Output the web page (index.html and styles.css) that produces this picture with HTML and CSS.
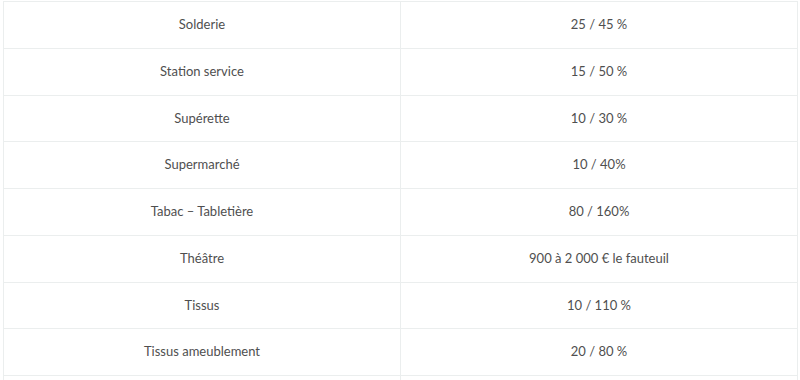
FILE: index.html
```html
<!DOCTYPE html>
<html lang="fr">
<head>
<meta charset="utf-8">
<link rel="stylesheet" href="styles.css">
</head>
<body>
<div class="wrap">
<table class="rates">
<tbody>
<tr><td>Solderie</td><td>25 / 45 %</td></tr>
<tr><td>Station service</td><td>15 / 50 %</td></tr>
<tr><td>Supérette</td><td>10 / 30 %</td></tr>
<tr><td>Supermarché</td><td>10 / 40%</td></tr>
<tr><td>Tabac – Tabletière</td><td>80 / 160%</td></tr>
<tr><td>Théâtre</td><td>900 à 2 000 € le fauteuil</td></tr>
<tr><td>Tissus</td><td>10 / 110 %</td></tr>
<tr><td>Tissus ameublement</td><td>20 / 80 %</td></tr>
<tr><td>&nbsp;</td><td>&nbsp;</td></tr>
</tbody>
</table>
</div>
</body>
</html>
```

FILE: styles.css
```css
html, body {
  margin: 0;
  padding: 0;
  background: #ffffff;
  overflow: hidden;
}
.wrap {
  padding: 1px 3px 0 3px;
}
.rates {
  width: 795px;
  border-collapse: collapse;
  table-layout: fixed;
  font-family: Lato, "Liberation Sans", sans-serif;
  font-size: 13px;
  color: #4f4f4f;
}
.rates td {
  border: 1px solid #ebeeee;
  text-align: center;
  padding: 12px 8px;
  line-height: 21.75px;
  width: 50%;
}
```
